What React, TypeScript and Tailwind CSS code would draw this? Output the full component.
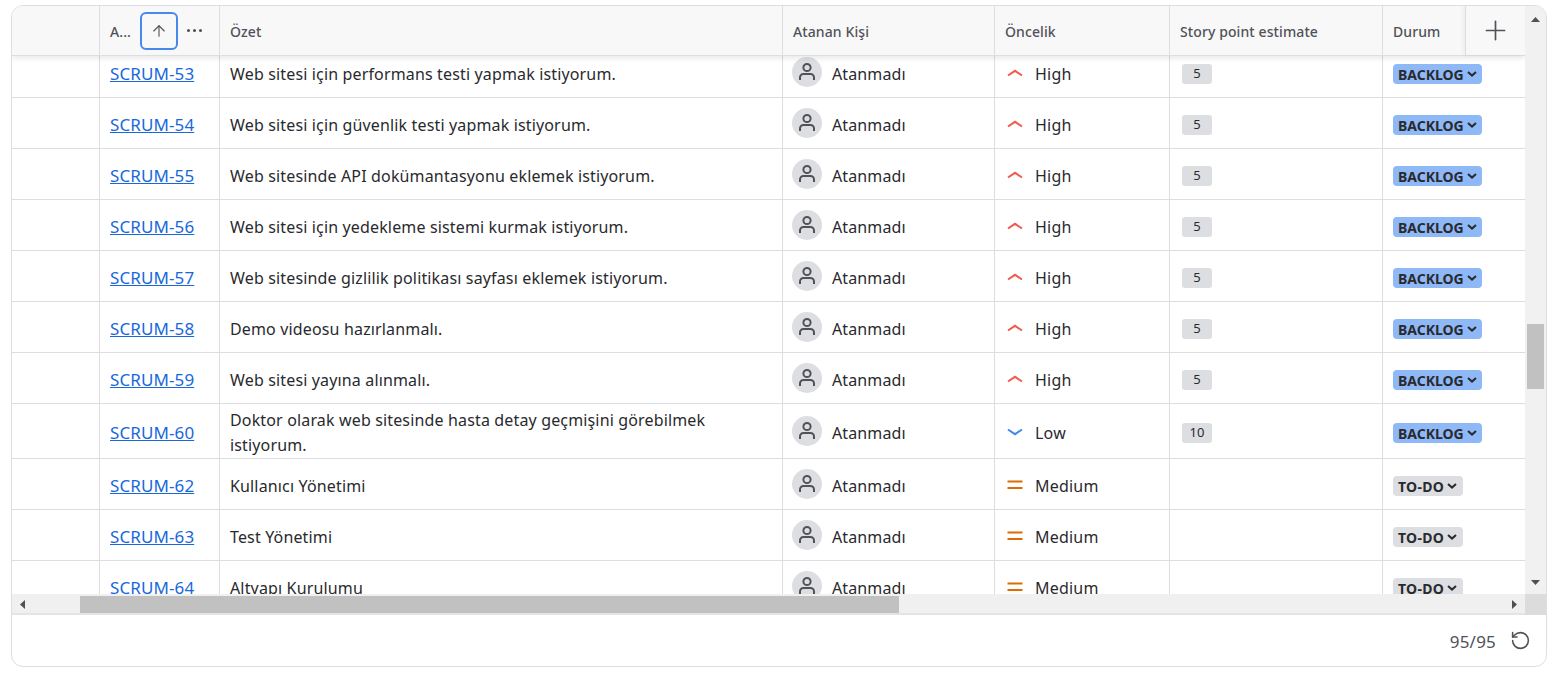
import React from 'react';
import { ArrowUp, Plus, RotateCcw } from 'lucide-react';

type Priority = 'High' | 'Low' | 'Medium';
type Row = { id: string; text: React.ReactNode; priority: Priority; points?: number; status: 'BACKLOG' | 'TO-DO'; tall?: boolean };

const rows: Row[] = [
  { id: 'SCRUM-53', text: 'Web sitesi için performans testi yapmak istiyorum.', priority: 'High', points: 5, status: 'BACKLOG' },
  { id: 'SCRUM-54', text: 'Web sitesi için güvenlik testi yapmak istiyorum.', priority: 'High', points: 5, status: 'BACKLOG' },
  { id: 'SCRUM-55', text: 'Web sitesinde API dokümantasyonu eklemek istiyorum.', priority: 'High', points: 5, status: 'BACKLOG' },
  { id: 'SCRUM-56', text: 'Web sitesi için yedekleme sistemi kurmak istiyorum.', priority: 'High', points: 5, status: 'BACKLOG' },
  { id: 'SCRUM-57', text: 'Web sitesinde gizlilik politikası sayfası eklemek istiyorum.', priority: 'High', points: 5, status: 'BACKLOG' },
  { id: 'SCRUM-58', text: 'Demo videosu hazırlanmalı.', priority: 'High', points: 5, status: 'BACKLOG' },
  { id: 'SCRUM-59', text: 'Web sitesi yayına alınmalı.', priority: 'High', points: 5, status: 'BACKLOG' },
  { id: 'SCRUM-60', text: 'Doktor olarak web sitesinde hasta detay geçmişini görebilmek istiyorum.', priority: 'Low', points: 10, status: 'BACKLOG', tall: true },
  { id: 'SCRUM-62', text: 'Kullanıcı Yönetimi', priority: 'Medium', status: 'TO-DO' },
  { id: 'SCRUM-63', text: 'Test Yönetimi', priority: 'Medium', status: 'TO-DO' },
  { id: 'SCRUM-64', text: 'Altyapı Kurulumu', priority: 'Medium', status: 'TO-DO' },
];

const cols = 'grid grid-cols-[87px_120px_563px_212px_175px_213px_143px]';

function PriorityIcon({ priority }: { priority: Priority }) {
  if (priority === 'High')
    return (
      <svg width="16" height="16" viewBox="0 0 16 16" fill="none" stroke="#f15b50" strokeWidth="2" className="mt-[2px]">
        <path d="M1 10.5 8 5.8l7 4.7" />
      </svg>
    );
  if (priority === 'Low')
    return (
      <svg width="16" height="16" viewBox="0 0 16 16" fill="none" stroke="#4688ec" strokeWidth="2" className="mt-[2px]">
        <path d="M1 5.5 8 10.2l7-4.7" />
      </svg>
    );
  return (
    <svg width="16" height="16" viewBox="0 0 16 16" fill="none" stroke="#e06c00" strokeWidth="2" className="mt-[2px]">
      <path d="M0.5 4.5h15M0.5 11h15" />
    </svg>
  );
}

function Avatar() {
  return (
    <span className="w-[30px] h-[30px] rounded-full bg-[#dddee1] flex items-center justify-center shrink-0">
      <svg width="18" height="20" viewBox="0 0 18 20" fill="none" stroke="#505258" strokeWidth="2">
        <circle cx="9" cy="5.5" r="3.6" />
        <path d="M2 18v-2.5A3.5 3.5 0 0 1 5.5 12h7a3.5 3.5 0 0 1 3.5 3.5V18" />
      </svg>
    </span>
  );
}

function Chevron() {
  return (
    <svg width="10" height="8" viewBox="0 0 10 8" fill="none" stroke="#292a2e" strokeWidth="2" className="ml-[3px]">
      <path d="M1 2l4 3.6L9 2" />
    </svg>
  );
}

function TableRow({ row }: { row: Row }) {
  const h = row.tall ? 'h-[55px]' : 'h-[51px]';
  const cell = 'border-l border-[#dddee1] flex items-center';
  return (
    <div className={`${cols} ${h} border-b border-[#dddee1] text-[#292a2e] text-[16px]`}>
      <div className="" />
      <div className={`${cell} pl-[10px]`}>
        <a href="#" className="mt-[4px] text-[#1868db] underline text-[17px] tracking-[0.1px]">{row.id}</a>
      </div>
      <div className={`${cell} pl-[10px] pr-[60px] leading-[25px]`}>
        <span className={`${row.tall ? 'mt-[3px]' : 'mt-[4px]'} tracking-[0.15px]`}>{row.text}</span>
      </div>
      <div className={`${cell} pl-[9px] gap-[10px]`}>
        <Avatar />
        <span className="mt-[4px] tracking-[0.12px]">Atanmadı</span>
      </div>
      <div className={`${cell} pl-[12px] gap-[12px]`}>
        <PriorityIcon priority={row.priority} />
        <span className="mt-[4px] tracking-[0.2px]">{row.priority}</span>
      </div>
      <div className={`${cell} pl-[12px]`}>
        {row.points !== undefined && (
          <span className="mt-[4px] w-[30px] h-[20px] rounded-[3px] bg-[#dddee1] flex items-center justify-center text-[13px] text-[#292a2e]">
            {row.points}
          </span>
        )}
      </div>
      <div className={`${cell} pl-[10px]`}>
        <span
          className={`mt-[4px] h-[20px] pl-[5px] rounded-[4px] flex items-center text-[14px] font-bold ${
            row.status === 'BACKLOG' ? 'bg-[#8fb8f6] pr-[5px]' : 'bg-[#dddee1] pr-[6px] tracking-[0.3px]'
          } text-[#292a2e]`}
        >
          {row.status}
          <Chevron />
        </span>
      </div>
    </div>
  );
}

function Triangle({ dir }: { dir: 'up' | 'down' | 'left' | 'right' }) {
  const d = { up: 'M0 6 4.5 1 9 6z', down: 'M0 1h9L4.5 6z', left: 'M6 0v9L1 4.5z', right: 'M1 0v9l5-4.5z' }[dir];
  const size = dir === 'up' || dir === 'down' ? { w: 9, h: 7 } : { w: 7, h: 9 };
  return (
    <svg width={size.w} height={size.h} viewBox={`0 0 ${size.w} ${size.h}`} fill="#505050">
      <path d={d} />
    </svg>
  );
}

export default function App() {
  return (
    <div className="w-[1561px] h-[675px] bg-white pt-[5px] pl-[11px] overflow-hidden font-['Noto_Sans',sans-serif]">
      <div className="w-[1536px] h-[662px] border border-[#dddee1] rounded-[12px] overflow-hidden flex flex-col">
        <div className="flex h-[588px] shrink-0">
          <div className="w-[1513px] overflow-hidden relative">
            {/* header */}
            <div className={`${cols} h-[50px] bg-[#f8f8f8] border-b border-[#dddee1] shadow-[0_2px_6px_rgba(0,0,0,0.1)] relative z-10 text-[14px] font-medium tracking-[0.1px] text-[#505258]`}>
              <div />
              <div className="border-l border-[#dddee1] pl-[10px] flex items-center">
                <span className="mt-[1px]">A...</span>
                <span className="ml-[9px] w-[38px] h-[38px] rounded-[6px] border-2 border-[#4688ec] flex items-center justify-center">
                  <ArrowUp size={18} strokeWidth={1.5} color="#505258" />
                </span>
                <span className="ml-[9px] flex gap-[3px]">
                  <i className="w-[3px] h-[3px] rounded-full bg-[#505258]" />
                  <i className="w-[3px] h-[3px] rounded-full bg-[#505258]" />
                  <i className="w-[3px] h-[3px] rounded-full bg-[#505258]" />
                </span>
              </div>
              <div className="border-l border-[#dddee1] pl-[10px] pt-[1px] flex items-center">Özet</div>
              <div className="border-l border-[#dddee1] pl-[10px] pt-[1px] flex items-center">Atanan Kişi</div>
              <div className="border-l border-[#dddee1] pl-[10px] pt-[1px] flex items-center">Öncelik</div>
              <div className="border-l border-[#dddee1] pl-[10px] pt-[1px] flex items-center">Story point estimate</div>
              <div className="border-l border-[#dddee1] pl-[10px] pt-[1px] flex items-center">Durum</div>
            </div>
            <div className="absolute top-0 right-0 z-20 w-[60px] h-[49px] bg-[#f8f8f8] border-l border-[#dddee1] shadow-[-2px_0_4px_rgba(0,0,0,0.05)] flex items-center justify-center">
              <Plus size={31} strokeWidth={1.3} color="#505258" />
            </div>
            {/* rows */}
            <div className="-mt-[9px]">
              {rows.map((r) => (
                <TableRow key={r.id} row={r} />
              ))}
            </div>
          </div>
          {/* vertical scrollbar */}
          <div className="w-[21px] bg-[#f1f1f1] flex flex-col items-center pt-[10px] pb-[8px]">
            <Triangle dir="up" />
            <div className="w-[17px] h-[65px] bg-[#c1c1c1] mt-[301px]" />
            <div className="mt-auto">
              <Triangle dir="down" />
            </div>
          </div>
        </div>
        {/* horizontal scrollbar */}
        <div className="flex h-[21px] shrink-0">
          <div className="w-[1513px] bg-[#f0f0f0] shadow-[inset_0_-2px_0_#e4e4e4] flex items-center">
            <div className="pl-[7px]">
              <Triangle dir="left" />
            </div>
            <div className="h-[17px] w-[819px] bg-[#c1c1c1] ml-[54px]" />
            <div className="ml-auto pr-[7px]">
              <Triangle dir="right" />
            </div>
          </div>
          <div className="w-[21px] bg-[#dcdcdc]" />
        </div>
        {/* footer */}
        <div className="flex-1 flex items-center justify-end pr-[15px] gap-[14px] text-[#505258] text-[17px]">
          <span className="mt-[3px] tracking-[0.2px]">95/95</span>
          <RotateCcw size={21} strokeWidth={1.8} color="#505258" />
        </div>
      </div>
    </div>
  );
}
